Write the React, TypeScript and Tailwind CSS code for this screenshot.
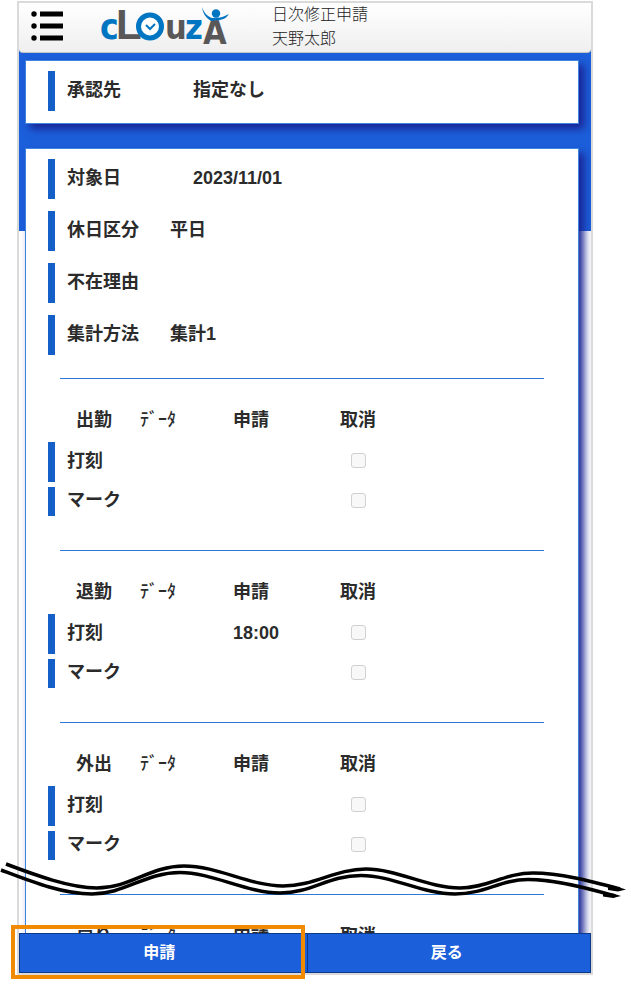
type Field = { label: string; value: string; labelClass: string };
type Row = { label: string; value: string };
type Section = { title: string; rows: Row[] };

const FIELDS: Field[] = [
  { label: "対象日", value: "2023/11/01", labelClass: "w-[126px]" },
  { label: "休日区分", value: "平日", labelClass: "w-[103px]" },
  { label: "不在理由", value: "", labelClass: "w-[103px]" },
  { label: "集計方法", value: "集計1", labelClass: "w-[103px]" },
];

const SECTIONS: Section[] = [
  { title: "出勤", rows: [{ label: "打刻", value: "" }, { label: "マーク", value: "" }] },
  { title: "退勤", rows: [{ label: "打刻", value: "18:00" }, { label: "マーク", value: "" }] },
  { title: "外出", rows: [{ label: "打刻", value: "" }, { label: "マーク", value: "" }] },
  { title: "戻り", rows: [{ label: "打刻", value: "" }, { label: "マーク", value: "" }] },
];

const CARD = "ml-[6px] mr-3 border border-[#3f85e0] bg-white pl-[22px] pt-[10px] shadow-[5px_5px_8px_#1a2494]";

function Logo() {
  return (
    <svg viewBox="0 0 132 44" className="h-11 w-[132px]" role="img" aria-label="CLOUZA">
      <g fontFamily="'DejaVu Sans Condensed', 'DejaVu Sans', sans-serif" fontWeight="700">
        <text x="1" y="34" fontSize="35" fill="#0075c2">c</text>
        <text x="17" y="34" fontSize="42" fontFamily="'Liberation Sans Narrow', 'Liberation Sans', sans-serif" fill="#595757">L</text>
        <text x="66" y="34" fontSize="34" fill="#595757">u</text>
        <text x="86" y="34" fontSize="34" fill="#0075c2">z</text>
        <text x="104" y="39" fontSize="34" fill="#595757">A</text>
      </g>
      <circle cx="51" cy="21.500" r="11.500" fill="#fff" stroke="#0075c2" strokeWidth="5" />
      <path d="M47 20l4 4 5-5" fill="none" stroke="#0075c2" strokeWidth="2" />
      <circle cx="117" cy="8.500" r="4.200" fill="#0075c2" />
      <path d="M103 2c1 7 4 11 9 14l9-1c5-1 7-3 9-6-4 2-6 3-9 3.500l-8 .5c-5-2-8-5-10-11z" fill="#0075c2" />
    </svg>
  );
}

function FieldRow({ label, value, labelClass }: Field) {
  return (
    <div className="flex h-10 items-center border-l-[7px] border-[#1560c8] pb-0.5 pl-3">
      <dt className={`shrink-0 ${labelClass}`}>{label}</dt>
      <dd>{value}</dd>
    </div>
  );
}

function PunchTable({ title, rows }: Section) {
  return (
    <section className="pb-[34px]">
      <hr className="mr-[34px] ml-3 border-t border-[#2f78d6]" />
      <table className="mt-5 w-full table-fixed border-separate border-spacing-0 text-left">
        <colgroup>
          <col className="w-[92px]" />
          <col className="w-[93px]" />
          <col className="w-[107px]" />
          <col />
        </colgroup>
        <thead>
          <tr className="h-[43px]">
            <th className="p-0 pb-0.5 pl-7">{title}</th>
            <th className="p-0 pb-0.5 font-medium">ﾃﾞｰﾀ</th>
            <th className="p-0 pb-0.5">申請</th>
            <th className="p-0 pb-0.5">取消</th>
          </tr>
        </thead>
        <tbody>
          {rows.map((r, i) => {
            const cell = i === 0 ? "p-0 pb-[5px]" : "p-0";

            return (
              <tr key={r.label}>
                <th className={cell}>
                  <div className={`flex items-center border-l-[7px] border-[#1560c8] pb-[3px] pl-3 ${i === 0 ? "h-10" : "h-[29px]"}`}>
                    {r.label}
                  </div>
                </th>
                <td className={cell}></td>
                <td className={cell}>
                  <div className="pb-[3px]">{r.value}</div>
                </td>
                <td className={cell}>
                  <div className="pb-[3px] pl-[11px]">
                    <input
                      type="checkbox"
                      disabled
                      aria-label={`${title} ${r.label} 取消`}
                      className="block size-[15px] appearance-none rounded-[3px] border border-[#d0d0d0] bg-[#f8f8f8]"
                    />
                  </div>
                </td>
              </tr>
            );
          })}
        </tbody>
      </table>
    </section>
  );
}

// Double wavy line showing that part of the form is cut out
function BreakLine() {
  return (
    <svg viewBox="0 0 631 40" className="pointer-events-none absolute bottom-[87px] left-0 w-full" aria-hidden="true">
      <g fill="none" stroke="#000" strokeWidth="3.500">
        <path d="M6 4C35 15 70 28 97 28C130 28 150 6 184 6C218 6 250 26 283 26C315 26 335 9 366 9C397 9 428 28 460 28C487 28 505 13 533 13C560 13 590 21 620 29" />
        <path d="M1 10C30 21 62 34 92 34C125 34 145 12.500 180 12.500C212 12.500 247 33 280 33C312 33 328 15.500 361 15.500C393 15.500 422 34 455 34C485 34 500 19.500 528 19.500C555 19.500 587 28 615 36" />
      </g>
      <path d="M608 27l10 0 8 2.500-8 2-10-1.500z" />
      <path d="M603 33.500l10 0 8 2.500-8 2-10-1.500z" />
    </svg>
  );
}

export default function App() {
  return (
    <div className="relative h-screen bg-white pt-px pr-[38px] pb-3 pl-[17px] font-['Liberation_Sans','Noto_Sans_CJK_JP',sans-serif] text-[#2b2b2b]">
      <div className="flex h-full flex-col border-2 border-[#dadada]">
        <header className="bg-[#1c5fda]">
          <div className="flex h-[50px] items-center rounded-b border-b border-[#c4c4c4] bg-linear-to-b from-white to-[#efefef] pb-px pl-3">
            <button type="button" aria-label="メニュー">
              <svg viewBox="0 0 32 32" className="size-8" aria-hidden="true">
                <circle cx="3" cy="3" r="2.700" />
                <circle cx="3" cy="15" r="2.700" />
                <circle cx="3" cy="27" r="2.700" />
                <path d="M9 3h23M9 15h23M9 27h23" stroke="#000" strokeWidth="5" />
              </svg>
            </button>
            <div className="ml-9">
              <Logo />
            </div>
            <div className="ml-[41px] text-base leading-6 font-light text-[#222]">
              <p>日次修正申請</p>
              <p>天野太郎</p>
            </div>
          </div>
        </header>

        <main className="min-h-0 flex-1 overflow-y-auto bg-[linear-gradient(#1c5fda_178px,#fff_178px)] pt-[7px] text-lg leading-6 font-bold [scrollbar-width:none]">
          <dl className={`pb-3 ${CARD}`}>
            <FieldRow label="承認先" value="指定なし" labelClass="w-[126px]" />
          </dl>

          <div className={`mt-6 ${CARD}`}>
            <dl className="mb-[23px] space-y-3">
              {FIELDS.map((f) => <FieldRow key={f.label} {...f} />)}
            </dl>
            {SECTIONS.map((s) => <PunchTable key={s.title} {...s} />)}
          </div>
        </main>

        <footer className="relative flex h-10 shrink-0 text-base font-bold text-white">
          <button type="button" className="flex-1 border border-[#0d3a86] bg-[#1c5fda] pr-2">申請</button>
          <button type="button" className="flex-1 border border-l-0 border-[#0d3a86] bg-[#1c5fda] pr-1">戻る</button>
          <div className="pointer-events-none absolute -top-2 right-1/2 -bottom-[6px] -left-2 border-4 border-[#f08a00]" />
        </footer>
      </div>
      <BreakLine />
    </div>
  );
}
